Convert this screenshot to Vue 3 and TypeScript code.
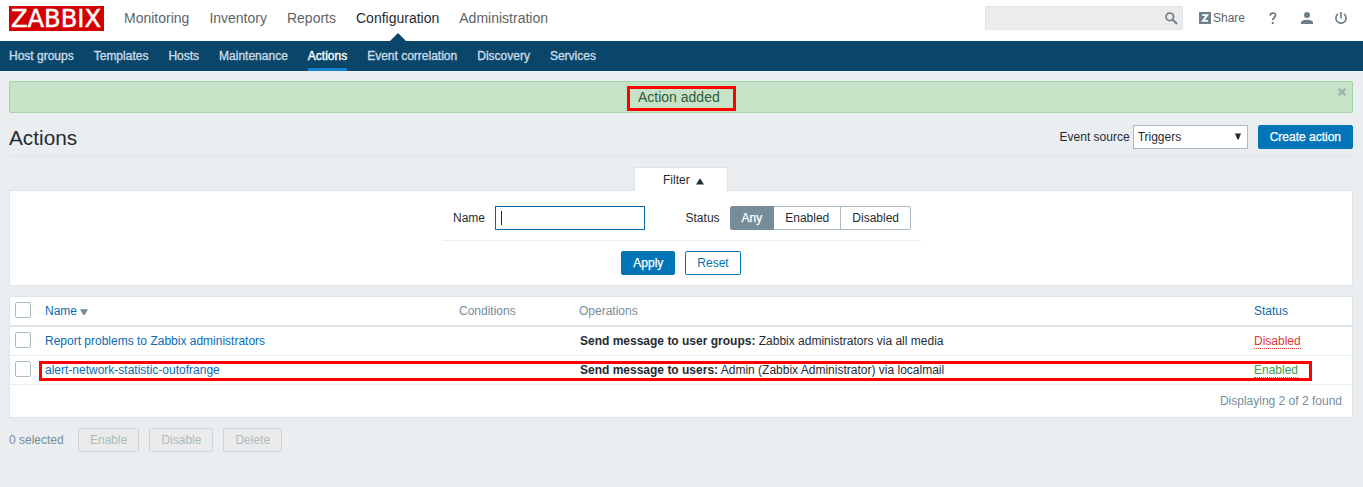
<script setup lang="ts">
import { ref } from 'vue'

interface ActionRow {
  name: string
  label: string
  detail: string
  enabled: boolean
}

const sections: string[] = ['Monitoring', 'Inventory', 'Reports', 'Configuration', 'Administration']
const pages: string[] = ['Host groups', 'Templates', 'Hosts', 'Maintenance', 'Actions', 'Event correlation', 'Discovery', 'Services']
const statuses: string[] = ['Any', 'Enabled', 'Disabled']
const bulk: string[] = ['Enable', 'Disable', 'Delete']
const status = ref<string>('Any')

const rows: ActionRow[] = [
  { name: 'Report problems to Zabbix administrators', label: 'Send message to user groups:', detail: 'Zabbix administrators via all media', enabled: false },
  { name: 'alert-network-statistic-outofrange', label: 'Send message to users:', detail: 'Admin (Zabbix Administrator) via localmail', enabled: true },
]
</script>

<template>
  <div class="page">
    <header class="top">
      <div class="logo"><svg width="95" height="25"><text x="2" y="21.3" textLength="90" lengthAdjust="spacingAndGlyphs">ZABBIX</text></svg></div>
      <nav class="sections">
        <a v-for="s in sections" :key="s" :class="{ current: s === 'Configuration' }">{{ s }}</a>
      </nav>
      <div class="search">
        <svg width="13" height="13" viewBox="0 0 13 13"><circle cx="4.8" cy="4.8" r="3.8" fill="none" stroke="#6d7f89" stroke-width="1.7" /><path d="M7.6 7.6 12 12" stroke="#6d7f89" stroke-width="2" /></svg>
      </div>
      <a class="share"><svg width="12" height="12" viewBox="0 0 12 12"><path fill="#6d7f89" d="M0 0h12v12H0z" /><path d="M3.2 3.1h5L3.9 8.9h5.2" fill="none" stroke="#fff" stroke-width="1.9" /></svg>Share</a>
      <svg class="help" width="8" height="13" viewBox="0 0 8 13"><path d="M1.2 3.8C1.2 .2 6.5 .2 6.5 3.3c0 2.1-2.7 2.4-2.7 5" fill="none" stroke="#6d7f89" stroke-width="1.8" /><path d="M2.8 10h2v2h-2z" fill="#6d7f89" /></svg>
      <svg class="user" width="12" height="12" viewBox="0 0 12 12"><circle cx="6" cy="3" r="3" fill="#6d7f89" /><path d="M0 12v-1.6C0 8.6 3.5 7.8 6 7.8s6 .8 6 2.6V12z" fill="#6d7f89" /></svg>
      <svg class="power" width="12" height="12" viewBox="0 0 12 12"><path d="M3.1 1.9a5.1 5.1 0 1 0 5.8 0M6 0v6.6" fill="none" stroke="#6d7f89" stroke-width="1.7" /></svg>
    </header>
    <nav class="pages">
      <a v-for="p in pages" :key="p" :class="{ current: p === 'Actions' }">{{ p }}</a>
    </nav>

    <main>
      <div class="message">
        <span>Action added</span>
        <svg class="close" width="8" height="8" viewBox="0 0 8 8"><path d="M.8.8l6.4 6.4M7.2.8.8 7.2" stroke="#9fb4ae" stroke-width="2.4" /></svg>
        <i class="mark mark-message"></i>
      </div>

      <div class="title">
        <h1>Actions</h1>
        <label>Event source</label>
        <div class="select"><span>Triggers</span><svg width="6" height="7" viewBox="0 0 6 7"><path d="M0 0.5h6L3.6 6.5H2.4z" fill="#1f2c33" /></svg></div>
        <button class="btn primary create">Create action</button>
      </div>

      <div class="tab">Filter<svg width="8" height="7" viewBox="0 0 8 7"><path d="M4 .2 8 6.4H0z" fill="#1f2c33" /></svg></div>
      <section class="filter">
        <div class="fields">
          <label class="name">Name</label>
          <div class="input"><i class="caret"></i></div>
          <label class="state">Status</label>
          <div class="segments">
            <button v-for="s in statuses" :key="s" :class="{ on: s === status }" @click="status = s">{{ s }}</button>
          </div>
        </div>
        <div class="submit">
          <button class="btn primary">Apply</button>
          <button class="btn">Reset</button>
        </div>
      </section>

      <section class="list">
        <div class="row head">
          <i class="check"></i>
          <a>Name<svg width="8" height="6" viewBox="0 0 8 6"><path d="M0 .3h8L5 5.7H3z" fill="#768d99" /></svg></a>
          <span>Conditions</span><span>Operations</span><a>Status</a>
        </div>
        <div v-for="r in rows" :key="r.name" class="row">
          <i class="check"></i>
          <a>{{ r.name }}</a>
          <span></span>
          <span class="operation"><b>{{ r.label }}</b> {{ r.detail }}</span>
          <span><a class="status" :class="{ ok: r.enabled }">{{ r.enabled ? 'Enabled' : 'Disabled' }}</a></span>
          <i v-if="r.enabled" class="mark mark-row"></i>
        </div>
        <div class="total">Displaying 2 of 2 found</div>
      </section>

      <footer>
        <span>0 selected</span>
        <button v-for="b in bulk" :key="b" class="btn off" disabled>{{ b }}</button>
      </footer>
    </main>
  </div>
</template>

<style>
body { margin: 0; background: #ebeef0; }
</style>

<style scoped>
* { box-sizing: border-box; }
.page { height: 487px; overflow: hidden; background: #ebeef0; color: #1f2c33; font: 12px/14px "Liberation Sans", Arial, sans-serif; }
button { font: inherit; cursor: pointer; margin: 0; }
svg { display: block; flex: none; }
.top { height: 41px; background: #fff; display: flex; align-items: flex-start; padding: 6px 16px 0 9px; }
.logo { width: 95px; height: 25px; background: #d40000; }
.logo svg { overflow: visible; }
.logo text { font: 24.5px "DejaVu Sans", sans-serif; fill: #fff; stroke: #fff; stroke-width: .5px; }
.sections { display: flex; gap: 20px; margin-left: 20px; font-size: 14px; line-height: 16px; padding-top: 4px; color: #5e6468; }
.sections a { position: relative; height: 31px; }
.sections .current { color: #1f2c33; }
.sections .current::after { content: ""; position: absolute; left: 50%; bottom: 0; margin-left: -8px; border: 8px solid transparent; border-top: 0; border-bottom-color: #0a466a; }
.search { margin-left: auto; width: 198px; height: 24px; border: 1px solid #e4e4e4; background: #ececec; display: flex; justify-content: flex-end; padding: 5px 4px 0 0; }
.share { display: flex; align-items: center; gap: 2px; margin: 5px 0 0 16px; color: #5e6468; }
.help { margin: 6px 0 0 24px; }
.user { margin: 6px 0 0 24px; }
.power { margin: 6px 0 0 22px; }
.pages { height: 30px; background: #0a466a; display: flex; gap: 20px; padding: 8px 9px 0; color: #c9dbe6; -webkit-text-stroke: .35px; }
.pages a { height: 22px; }
.pages .current { color: #fff; border-bottom: 3px solid #0f83cf; }
main { padding: 10px 10px 0 9px; }
.message { position: relative; height: 32px; border: 1px solid #a3d4a6; border-radius: 2px; background: #c6e3c8; color: #36593a; font-size: 14px; line-height: 30px; padding-left: 628px; }
.close { position: absolute; right: 6px; top: 6px; }
.mark { position: absolute; border: 3px solid #f00; pointer-events: none; }
.mark-message { left: 617px; top: 4px; width: 109px; height: 25px; }
.mark-row { left: 29px; top: 5px; width: 1273px; height: 20px; }
.title { height: 44px; border-bottom: 1px solid #dfe4e7; display: flex; align-items: center; padding-top: 4px; }
h1 { font-size: 20.8px; line-height: 24px; font-weight: 400; margin: 2px auto 0 0; }
.select { width: 115px; height: 24px; border: 1px solid #acbbc2; background: #fff; display: flex; align-items: center; justify-content: space-between; padding: 0 6px 0 4px; margin: 0 10px 0 3px; }
.btn { height: 24px; border: 1px solid #0275b8; border-radius: 2px; background: #fff; color: #0275b8; padding: 0 11px; line-height: 22px; }
.btn.primary { background: #0275b8; color: #fff; -webkit-text-stroke: .25px; }
.tab { position: relative; width: 94px; height: 24px; margin: 10px auto -1px 625px; border: 1px solid #dfe4e7; border-bottom: 0; background: #fff; display: flex; align-items: center; padding-left: 28px; gap: 6px; }
.tab svg { margin-top: 3px; }
.filter { height: 96px; border: 1px solid #dfe4e7; background: #fff; }
.fields { width: 479px; height: 50px; margin: 0 0 0 432px; border-bottom: 1px solid #ebeef0; display: flex; align-items: center; padding: 4px 10px 0 11px; }
.name { width: 42px; }
.input { width: 150px; height: 24px; border: 1px solid #0a66a0; padding: 4px 5px; }
.caret { display: block; width: 1px; height: 14px; background: #1f2c33; }
.state { margin-left: auto; margin-right: 10px; }
.segments { display: flex; }
.segments button { height: 24px; border: 1px solid #acbbc2; background: #fff; color: #1f2c33; padding: 0 11px; line-height: 22px; }
.segments button + button { border-left: 0; }
.segments button + button + button { border-left: 1px solid #acbbc2; margin-left: -1px; border-radius: 0 2px 2px 0; }
.segments .on { background: #768d99; border-color: #768d99; color: #fff; border-radius: 2px 0 0 2px; -webkit-text-stroke: .25px; }
.submit { display: flex; gap: 10px; justify-content: center; padding-top: 10px; }
.list { margin-top: 10px; border: 1px solid #dfe4e7; background: #fff; height: 122px; }
.row { position: relative; display: grid; grid-template-columns: 35px 414px 120px 675px 1fr; height: 29px; padding-top: 7px; border-bottom: 1px solid #ebeef0; white-space: nowrap; }
.row a { color: #0a6bb0; }
.operation { padding-left: 1px; }
.head { height: 30px; border-bottom: 2px solid #dfe4e7; color: #768d99; }
.head a { display: flex; gap: 3px; }
.head svg { margin-top: 5px; }
.check { width: 16px; height: 16px; border: 1px solid #acbbc2; border-radius: 2px; background: #fff; margin: -2px 0 0 5px; }
.row .status { display: inline-block; height: 15px; color: #e33734; border-bottom: 1px dotted; }
.row .status.ok { color: #429e47; }
.total { text-align: right; color: #768d99; padding: 9px 10px; }
footer { display: flex; align-items: center; margin-top: 10px; color: #768d99; }
footer span { width: 69px; }
footer .off { background: #ebebeb; border-color: #ccd5d9; color: #acbbc2; margin-right: 10px; cursor: default; }
</style>
